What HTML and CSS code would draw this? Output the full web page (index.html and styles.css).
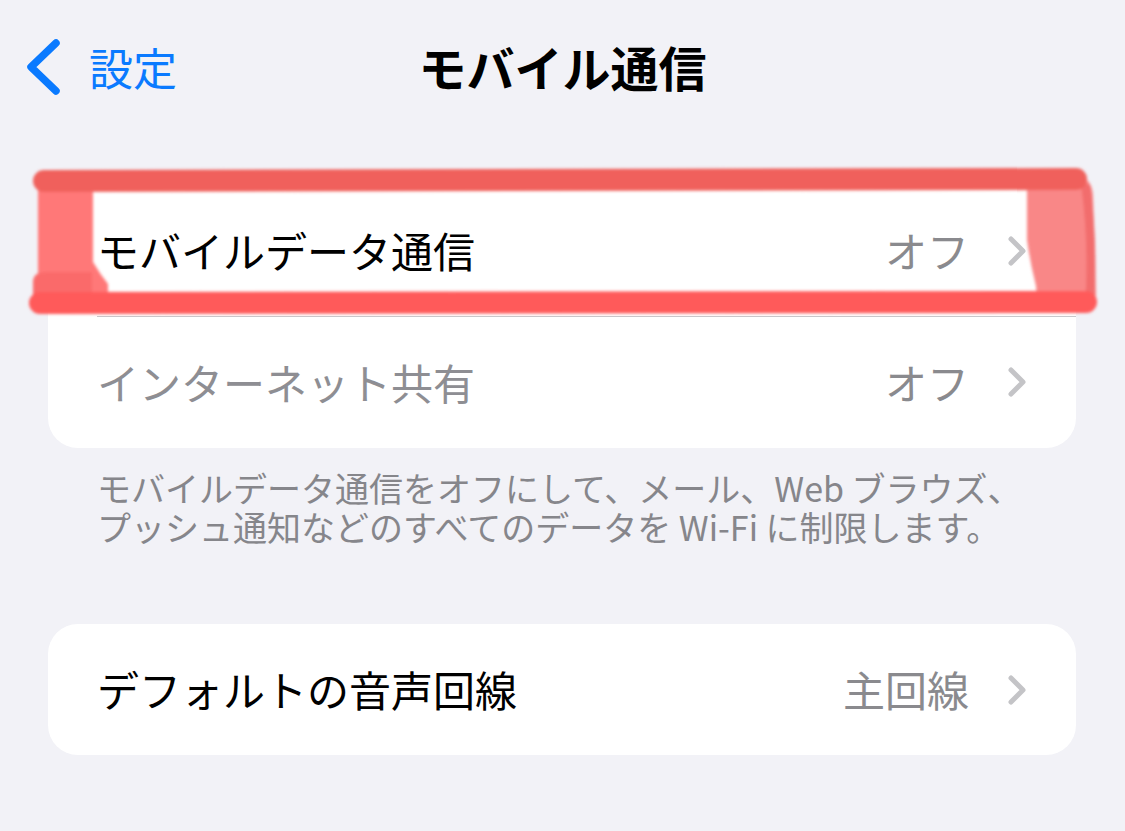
FILE: index.html
```html
<!DOCTYPE html>
<html lang="ja">
<head>
  <meta charset="UTF-8">
  <meta name="viewport" content="width=device-width, initial-scale=1.0">
  <title>モバイル通信</title>
  <link rel="stylesheet" href="styles.css">
</head>
<body>
  <header class="nav">
    <a class="back" href="#">
      <svg class="back-icon" width="40" height="62" viewBox="0 0 40 62">
        <polyline points="32,7 7,31 32,55" fill="none" stroke="#0a7aff" stroke-width="7.5" stroke-linecap="round" stroke-linejoin="round"/>
      </svg>
      <span>設定</span>
    </a>
    <h1 class="nav-title">モバイル通信</h1>
    <span></span>
  </header>

  <main class="content">
    <section class="group">
      <div class="row">
        <span class="label">モバイルデータ通信</span>
        <span class="value">オフ</span>
        <svg class="chevron" width="20" height="32" viewBox="0 0 20 32"><polyline points="4,4 16,16 4,28" fill="none" stroke="#c4c4c7" stroke-width="5" stroke-linecap="round" stroke-linejoin="round"/></svg>
      </div>
      <div class="row disabled">
        <span class="label">インターネット共有</span>
        <span class="value">オフ</span>
        <svg class="chevron" width="20" height="32" viewBox="0 0 20 32"><polyline points="4,4 16,16 4,28" fill="none" stroke="#c4c4c7" stroke-width="5" stroke-linecap="round" stroke-linejoin="round"/></svg>
      </div>
    </section>

    <div class="footer">
      <p class="footer-line">モバイルデータ通信をオフにして、メール、Web ブラウズ、</p>
      <p class="footer-line">プッシュ通知などのすべてのデータを Wi-Fi に制限します。</p>
    </div>

    <section class="group second">
      <div class="row">
        <span class="label">デフォルトの音声回線</span>
        <span class="value">主回線</span>
        <svg class="chevron" width="20" height="32" viewBox="0 0 20 32"><polyline points="4,4 16,16 4,28" fill="none" stroke="#c4c4c7" stroke-width="5" stroke-linecap="round" stroke-linejoin="round"/></svg>
      </div>
    </section>
  </main>

  <!-- hand-drawn highlight around the first row -->
  <svg class="markup" width="1125" height="831" viewBox="0 0 1125 831">
    <defs>
      <filter id="soft" x="-5%" y="-20%" width="110%" height="140%">
        <feGaussianBlur stdDeviation="1.5"/>
      </filter>
    </defs>
    <g filter="url(#soft)">
      <path d="M38 190 Q37 176 52 175 L93 177 L93 262 Q100 274 108 284 L108 296 L46 296 L38 288 Z" fill="#ff7878"/>
      <path d="M33 282 Q33 272 46 272 L92 272 L92 305 L40 305 Q33 305 33 297 Z" fill="#fa6b6b"/>
      <path d="M1027 180 L1078 176 Q1092 178 1093 196 L1096 294 Q1095 311 1080 312 L1038 312 L1036 286 Q1030 262 1027 240 Z" fill="#f98787"/>
      <path d="M1086 188 Q1093 240 1090 300" fill="none" stroke="#f26d6d" stroke-width="9" stroke-linecap="round"/>
      <path d="M44 181 L1076 179" fill="none" stroke="#f0615c" stroke-width="22" stroke-linecap="round"/>
      <path d="M40 303 L1086 302" fill="none" stroke="#ff5a5a" stroke-width="22" stroke-linecap="round"/>
    </g>
  </svg>
</body>
</html>
```

FILE: styles.css
```css
body {
  font-family: "Noto Sans CJK JP", "Noto Sans", sans-serif;
  margin: 0;
  padding: 0;
  background-color: #f2f2f7;
  width: 1125px;
  height: 831px;
  overflow: hidden;
  position: relative;
  color: #000;
}
.nav {
  display: grid;
  grid-template-columns: 1fr auto 1fr;
  align-items: center;
  height: 134px;
}
.back {
  display: flex;
  align-items: center;
  gap: 25px;
  padding-left: 24px;
  color: #0a7aff;
  text-decoration: none;
  font-size: 44px;
  line-height: 1.2;
}
.back-icon {
  display: block;
}
.nav-title {
  margin: 0;
  font-size: 48px;
  font-weight: 700;
  line-height: 1.2;
}
.content {
  padding: 0 49px 0 48px;
}
.group {
  margin-top: 51px;
  background: #fff;
  border-radius: 30px;
  overflow: hidden;
}
.group.second {
  margin-top: 79px;
}
.row {
  display: flex;
  align-items: center;
  height: 131px;
  padding: 0 49px 0 49px;
  font-size: 42px;
  line-height: 1.2;
}
.row + .row {
  height: 132px;
  background: linear-gradient(#c8c8cc, #c8c8cc) no-repeat 49px 0 / 100% 1px;
}
.label {
  flex: 1;
}
.row.disabled .label {
  color: #8e8e93;
}
.value {
  color: #8a8a8e;
  margin-right: 38px;
}
.chevron {
  display: block;
}
.footer {
  margin-top: 22px;
  padding-left: 49px;
  display: flex;
  flex-direction: column;
  gap: 3px;
  color: #86868b;
  font-size: 34px;
  line-height: 36px;
}
.footer-line {
  margin: 0;
  white-space: nowrap;
}
.markup {
  position: absolute;
  top: 0;
  left: 0;
  pointer-events: none;
}
```
